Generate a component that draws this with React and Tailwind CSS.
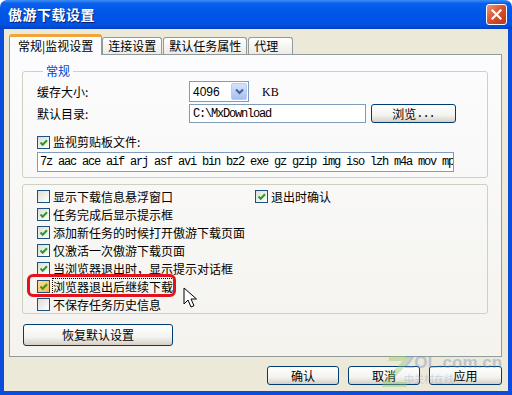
import React from "react";

const cjk = "font-['Noto_Sans_CJK_SC','Noto_Sans',sans-serif]";

const Check = ({ checked, hover }) => (
  <span
    className={`w-[13px] h-[13px] shrink-0 border border-[#1C5180] flex items-center justify-center ${
      hover
        ? "bg-[linear-gradient(135deg,#FEDF9C,#F9B545)]"
        : "bg-[linear-gradient(135deg,#DCDCD7,#FFFFFF)]"
    }`}
  >
    {checked && (
      <svg width="11" height="11" viewBox="0 0 11 11">
        <path d="M2.5 5.5l2.2 2.3 4.3-4.6" fill="none" stroke="#21A121" strokeWidth="2" />
      </svg>
    )}
  </span>
);

const XpButton = ({ children, className = "" }) => (
  <div
    className={`border border-[#003C74] rounded-[3px] bg-[linear-gradient(to_bottom,#FFFFFF,#F3F3EF_60%,#D6D0C5)] flex items-center justify-center ${className}`}
  >
    {children}
  </div>
);

const CheckRow = ({ label, checked, hover, focus, className = "" }) => (
  <div className={`flex items-center gap-[3px] h-[18px] ${className}`}>
    <Check checked={checked} hover={hover} />
    <span className={`leading-[15px] ${focus ? "outline-1 outline-dotted outline-black" : ""}`}>
      {label}
    </span>
  </div>
);

export default function App() {
  return (
    <div className={`w-[512px] h-[395px] relative overflow-hidden flex flex-col bg-white text-[12px] text-black ${cjk}`}>
      {/* title bar */}
      <div className="h-[29px] shrink-0 rounded-t-[7px] flex items-center justify-between pl-[8px] pr-[5px] bg-[linear-gradient(to_bottom,#3B8DF5_0%,#0A5FEA_12%,#0056E8_45%,#0052E2_85%,#0340C4_100%)]">
        <span className="text-white font-bold text-[14px] tracking-[0.5px] [text-shadow:1px_1px_0_#0A1F6F]">
          傲游下载设置
        </span>
        <div className="w-[21px] h-[21px] rounded-[3px] border border-white bg-[linear-gradient(135deg,#F09478,#D8502C_50%,#B8361A)] flex items-center justify-center">
          <svg width="11" height="11" viewBox="0 0 11 11">
            <path d="M1.5 1.5l8 8M9.5 1.5l-8 8" stroke="white" strokeWidth="2.2" strokeLinecap="square" />
          </svg>
        </div>
      </div>

      {/* body */}
      <div className="flex-1 flex flex-col bg-[#ECE9D8] border-x-4 border-b-4 border-[#0B4CDC] pl-[5px] pr-[6px] pt-[5px]">
        {/* tabs */}
        <div className="flex items-end h-[20px]">
          <div className="relative z-10 h-[21px] -mb-[1px] px-[8px] flex items-center bg-[#FCFCFE] border-x border-[#919B9C] border-t-[3px] border-t-[#F0A53A] rounded-t-[3px]">
            常规|监视设置
          </div>
          <div className="h-[17px] px-[5px] flex items-center border border-b-0 border-[#919B9C] rounded-t-[3px] bg-[linear-gradient(to_bottom,#FFFFFF,#ECEBE6)]">
            连接设置
          </div>
          <div className="h-[17px] px-[5px] ml-[1px] flex items-center border border-b-0 border-[#919B9C] rounded-t-[3px] bg-[linear-gradient(to_bottom,#FFFFFF,#ECEBE6)]">
            默认任务属性
          </div>
          <div className="h-[17px] w-[45px] px-[5px] ml-[1px] flex items-center border border-b-0 border-[#919B9C] rounded-t-[3px] bg-[linear-gradient(to_bottom,#FFFFFF,#ECEBE6)]">
            代理
          </div>
        </div>

        {/* panel */}
        <div className="h-[303px] border border-[#919B9C] bg-[linear-gradient(to_bottom,#FCFCFE,#F4F3EE)] pl-[12px] pr-[13px] pt-[8px]">
          <fieldset className="border border-[#D0D0BF] rounded-[3px] pl-[14px] pb-[5px]">
            <legend className="ml-[6px] px-[3px] leading-[16px] text-[#0046D5]">常规</legend>
            <div className="flex items-center h-[21px] mt-[2px]">
              <span className="w-[152px]">缓存大小:</span>
              <div className="w-[60px] h-[21px] border border-[#7F9DB9] bg-white flex items-center justify-between pl-[3px] pr-[1px]">
                <span className="font-['Liberation_Sans',sans-serif] text-[12px]">4096</span>
                <div className="w-[16px] h-[17px] rounded-[2px] border border-[#B6CBF5] bg-[linear-gradient(to_bottom,#D6E3FD,#A6BFF4)] flex items-center justify-center">
                  <svg width="9" height="7" viewBox="0 0 9 7">
                    <path d="M1 1.5l3.5 3.5 3.5-3.5" fill="none" stroke="#4D6185" strokeWidth="2" />
                  </svg>
                </div>
              </div>
              <span className="ml-[13px] font-['Liberation_Serif',serif] text-[12px]">KB</span>
            </div>
            <div className="flex items-center h-[19px] mt-[2px]">
              <span className="w-[152px]">默认目录:</span>
              <div className="w-[177px] h-[19px] border border-[#7F9DB9] bg-white flex items-center pl-[3px] font-['Liberation_Mono',monospace] text-[12px] tracking-[-1.2px]">
                C:\MxDownload
              </div>
              <XpButton className="ml-[5px] w-[85px] h-[19px]">
                浏览<span className="font-['Liberation_Mono',monospace] tracking-[-1px]">...</span>
              </XpButton>
            </div>
            <div className="flex items-center gap-[3px] h-[14px] mt-[12px]">
              <Check checked />
              <span>监视剪贴板文件:</span>
            </div>
            <div className="w-[417px] h-[20px] mt-[3px] border border-[#7F9DB9] bg-white flex items-center pl-[2px] overflow-hidden whitespace-nowrap font-['Liberation_Mono',monospace] text-[12px] tracking-[-1.2px]">
              7z aac ace aif arj asf avi bin bz2 exe gz gzip img iso lzh m4a mov mp3 mpeg mpg
            </div>
          </fieldset>

          <fieldset className="mt-[6px] border border-[#D0D0BF] rounded-[3px] pl-[14px] pt-[2px]">
            <div className="flex">
              <CheckRow label="显示下载信息悬浮窗口" className="w-[218px]" />
              <CheckRow label="退出时确认" checked />
            </div>
            <CheckRow label="任务完成后显示提示框" checked />
            <CheckRow label="添加新任务的时候打开傲游下载页面" checked />
            <CheckRow label="仅激活一次傲游下载页面" checked />
            <CheckRow label="当浏览器退出时，显示提示对话框" checked />
            <CheckRow label="浏览器退出后继续下载" checked hover focus />
            <CheckRow label="不保存任务历史信息" />
          </fieldset>

          <XpButton className="mt-[10px] ml-[1px] w-[150px] h-[22px]">恢复默认设置</XpButton>
        </div>

        {/* dialog buttons */}
        <div className="flex justify-end gap-[9px] mt-[9px]">
          <XpButton className="w-[72px] h-[19px]">确认</XpButton>
          <XpButton className="w-[72px] h-[19px]">取消</XpButton>
          <XpButton className="w-[73px] h-[19px]">应用</XpButton>
        </div>
      </div>

      {/* annotation: red highlight + cursor */}
      <div className="absolute left-[27px] top-[274px] w-[149px] h-[23px] border-[3px] border-[#E3121B] rounded-[6px]" />
      <svg className="absolute left-[183px] top-[287px]" width="14" height="22" viewBox="0 0 14 22">
        <path d="M1 1v16l4-4 3 7 3-1.3-3-6.7h5.5z" fill="white" stroke="black" strokeWidth="1" strokeLinejoin="round" />
      </svg>

      {/* watermark */}
      <div className="absolute left-[383px] top-[350px] opacity-40 pointer-events-none flex items-start">
        <span className="font-['Liberation_Sans',sans-serif] font-bold italic text-[44px] leading-[44px] text-[#8FC46A]">Z</span>
        <div className="flex flex-col -ml-[6px] mt-[4px]">
          <span className="font-['Liberation_Sans',sans-serif] font-bold text-[17px] leading-[18px] text-[#6E8FC0]">ZOL.com.cn</span>
          <span className="text-[10px] leading-[14px] text-[#8FA6C8]">中关村在线</span>
        </div>
      </div>
    </div>
  );
}
